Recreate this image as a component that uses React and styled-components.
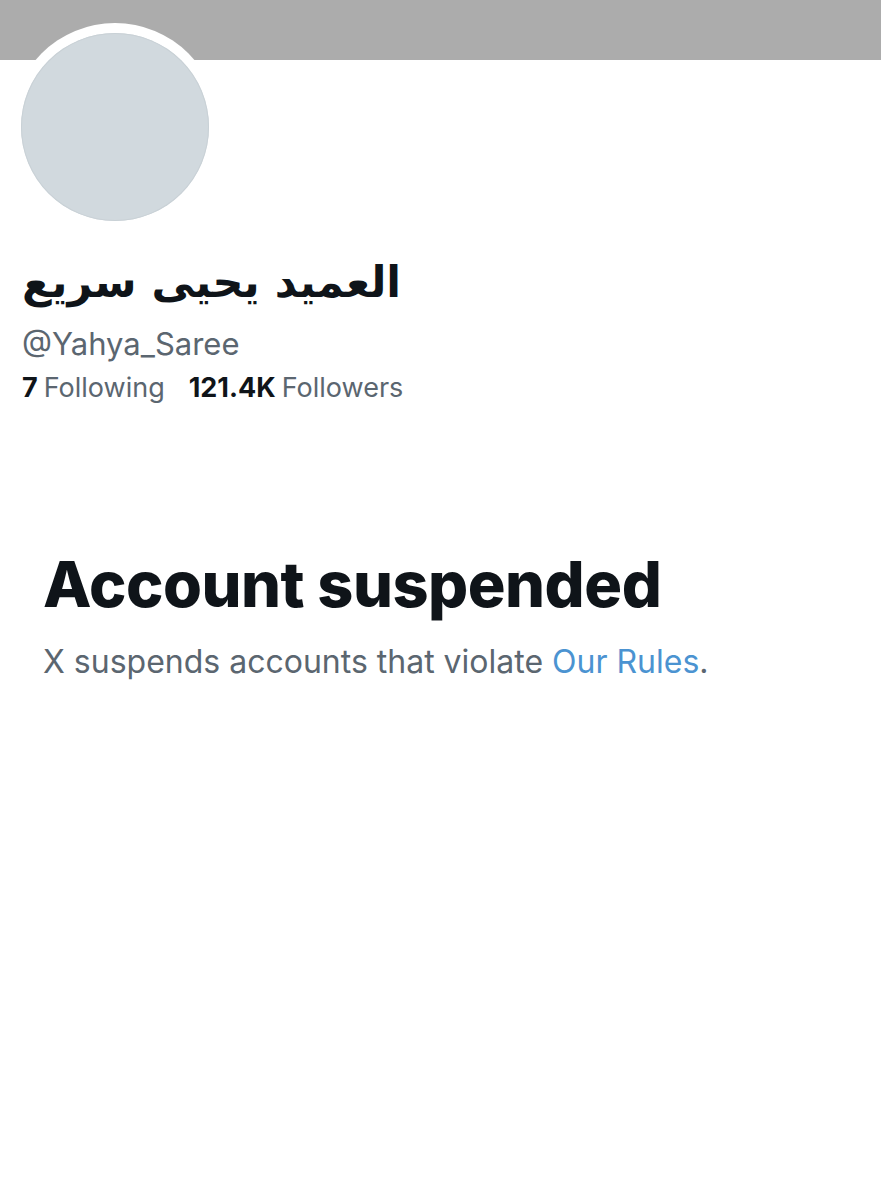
import React from "react";
import styled, { createGlobalStyle } from "styled-components";

const Global = createGlobalStyle`
  html, body { margin: 0; padding: 0; background: #ffffff; }
  body { font-family: Inter, "Noto Sans", sans-serif; }
`;

const Page = styled.div`
  width: 881px;
  min-height: 1200px;
  background: #fff;
  display: flex;
  flex-direction: column;
`;

const Banner = styled.div`
  height: 60px;
  background: #acacac;
`;

const Profile = styled.div`
  padding: 0 0 0 22px;
  display: flex;
  flex-direction: column;
`;

const AvatarRing = styled.div`
  width: 208px;
  height: 208px;
  border-radius: 50%;
  background: #fff;
  margin: -37px 0 0 -11px;
  display: flex;
  align-items: center;
  justify-content: center;
`;

const Avatar = styled.div`
  width: 188px;
  height: 188px;
  border-radius: 50%;
  background: #d1d9de;
  box-shadow: inset 0 0 0 1px #c9d1d6;
`;

const Name = styled.div`
  margin-top: 24px;
  font-family: "DejaVu Sans", "Noto Sans", sans-serif;
  font-weight: 700;
  font-size: 43px;
  line-height: 54px;
  color: #0f1419;
  direction: rtl;
  align-self: flex-start;
`;

const Handle = styled.div`
  margin-top: 15px;
  font-size: 31px;
  line-height: 40px;
  color: #5b6670;
`;

const Stats = styled.div`
  margin-top: 7px;
  display: flex;
  gap: 24px;
  font-size: 27px;
  line-height: 34px;
  color: #5b6670;
`;

const Stat = styled.span`
  b { color: #0f1419; font-weight: 700; margin-right: 6px; }
`;

const Suspended = styled.div`
  padding: 139px 0 0 43px;
  display: flex;
  flex-direction: column;
`;

const Title = styled.h1`
  margin: 0;
  font-size: 63px;
  line-height: 80px;
  font-weight: 800;
  letter-spacing: -0.5px;
  color: #0f1419;
`;

const Sub = styled.p`
  margin: 18px 0 0;
  font-size: 32px;
  line-height: 40px;
  color: #5b6670;
`;

const Link = styled.a`
  color: #4b93d1;
  text-decoration: none;
`;

export default function App() {
  return (
    <Page>
      <Global />
      <Banner />
      <Profile>
        <AvatarRing>
          <Avatar />
        </AvatarRing>
        <Name>العميد يحيى سريع</Name>
        <Handle>@Yahya_Saree</Handle>
        <Stats>
          <Stat><b>7</b>Following</Stat>
          <Stat><b>121.4K</b>Followers</Stat>
        </Stats>
      </Profile>
      <Suspended>
        <Title>Account suspended</Title>
        <Sub>
          X suspends accounts that violate <Link href="#">Our Rules</Link>.
        </Sub>
      </Suspended>
    </Page>
  );
}
